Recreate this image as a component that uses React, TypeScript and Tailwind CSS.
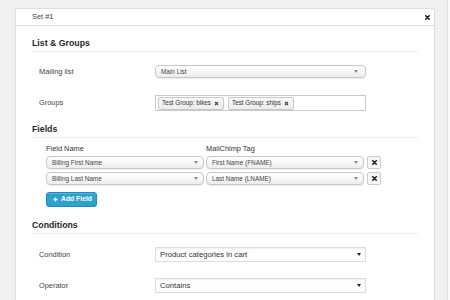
import type { ReactNode } from "react";

const XIcon = ({ size = 5 }: { size?: number }) => (
  <svg width={size} height={size} viewBox="0 0 10 10">
    <path d="M1.5 1.5 L8.5 8.5 M8.5 1.5 L1.5 8.5" stroke="#111" strokeWidth="2.8" strokeLinecap="square" />
  </svg>
);

const Arrow = ({ color = "#888" }: { color?: string }) => (
  <svg width="4" height="3" viewBox="0 0 4 3">
    <path d="M0 0 L4 0 L2 3 Z" fill={color} />
  </svg>
);

const Heading = ({ children, className = "" }: { children: ReactNode; className?: string }) => (
  <div
    className={`text-[8.75px] font-bold leading-[12px] text-[#23282d] pb-[2px] border-b border-[#ececec] ${className}`}
  >
    {children}
  </div>
);

const Chosen = ({ text, className = "" }: { text: string; className?: string }) => (
  <div
    className={`flex items-center justify-between h-[13px] pl-[5px] pr-[5px] rounded-[4px] border border-[#c8c8c8] bg-linear-to-b from-white via-[#f7f7f7] to-[#ececec] shadow-[0_1px_1px_rgba(0,0,0,0.08)] text-[6.4px] text-[#444] ${className}`}
  >
    <span>{text}</span>
    <Arrow />
  </div>
);

const Tag = ({ text }: { text: string }) => (
  <div className="flex items-center gap-[3px] h-[13px] pl-[3px] pr-[4px] rounded-[2px] border border-[#c8c8c8] bg-linear-to-b from-[#f8f8f8] to-[#ededed] text-[6.3px] text-[#333]">
    <span>{text}</span>
    <svg width="5" height="5" viewBox="0 0 10 10">
      <path d="M2 2 L8 8 M8 2 L2 8" stroke="#444" strokeWidth="2.2" />
    </svg>
  </div>
);

const Plain = ({ text }: { text: string }) => (
  <div className="flex items-center justify-between w-[211px] h-[15px] pl-[4px] pr-[4px] border border-[#ddd] bg-white shadow-[inset_0_1px_2px_rgba(0,0,0,0.07)] text-[7.7px] text-[#333]">
    <span>{text}</span>
    <Arrow color="#222" />
  </div>
);

const Row = ({ label, children, className = "" }: { label: string; children: ReactNode; className?: string }) => (
  <div className={`flex items-center ${className}`}>
    <div className="w-[123px] pl-[7px] text-[7.4px] text-[#444]">{label}</div>
    {children}
  </div>
);

const FieldRow = ({ name, tag, className = "" }: { name: string; tag: string; className?: string }) => (
  <div className={`flex items-center ${className}`}>
    <Chosen text={name} className="w-[158px]" />
    <Chosen text={tag} className="w-[158px] ml-[2px]" />
    <div className="ml-[3px] w-[14px] h-[13px] flex items-center justify-center rounded-[2px] border border-[#ccc] bg-[#f5f5f5]">
      <XIcon size={5} />
    </div>
  </div>
);

export default function App() {
  return (
    <div className="flex w-[450px] h-[300px] overflow-hidden bg-[#f1f1f1] font-['Liberation_Sans',Arial,sans-serif]">
      <div className="w-[448px] h-full border-r border-[#e3e3e3] pt-[8px] pl-[15px]">
        <div className="w-[420px] h-[400px] bg-white border border-[#dedede] rounded-t-[2px] shadow-[0_1px_1px_rgba(0,0,0,0.04)]">
          <div className="flex items-center justify-between h-[17px] pl-[16px] pr-[4px] border-b border-[#dcdcdc] text-[7.4px] text-[#444]">
            <span>Set #1</span>
            <XIcon size={5} />
          </div>

          <div className="px-[16px]">
            <Heading className="mt-[11px]">List &amp; Groups</Heading>

            <Row label="Mailing list" className="mt-[13px]">
              <Chosen text="Main List" className="w-[211px] pr-[7px]" />
            </Row>

            <Row label="Groups" className="mt-[17px]">
              <div className="flex items-center gap-[4px] w-[211px] h-[16px] pl-[2px] border border-[#c8c8c8] bg-white">
                <Tag text="Test Group: bikes" />
                <Tag text="Test Group: ships" />
              </div>
            </Row>

            <Heading className="mt-[12px]">Fields</Heading>

            <div className="pl-[14px]">
              <div className="flex mt-[6px] text-[7.4px] leading-[10px] text-[#333]">
                <div className="w-[160px]">Field Name</div>
                <div>MailChimp Tag</div>
              </div>
              <FieldRow name="Billing First Name" tag="First Name (FNAME)" className="mt-[2px]" />
              <FieldRow name="Billing Last Name" tag="Last Name (LNAME)" className="mt-[3px]" />
              <button className="mt-[7px] flex items-center gap-[3px] h-[15px] w-[51px] pl-[6px] rounded-[3px] border border-[#1e8cbe] bg-[#2ea2cc] text-white text-[6.8px] font-bold shadow-[inset_0_1px_0_rgba(120,200,230,0.5)]">
                <svg width="5" height="5" viewBox="0 0 10 10">
                  <path d="M5 1 V9 M1 5 H9" stroke="#fff" strokeWidth="2.6" />
                </svg>
                <span>Add Field</span>
              </button>
            </div>

            <Heading className="mt-[12px] pb-[1px]">Conditions</Heading>

            <Row label="Condition" className="mt-[13px]">
              <Plain text="Product categories in cart" />
            </Row>

            <Row label="Operator" className="mt-[16px]">
              <Plain text="Contains" />
            </Row>
          </div>
        </div>
      </div>
      <div className="flex-1 bg-[#fafafa]" />
    </div>
  );
}
